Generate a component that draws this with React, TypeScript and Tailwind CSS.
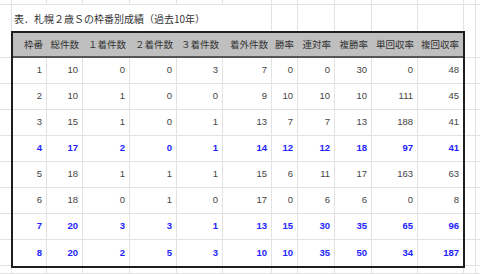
import React from "react";

// Sheet column widths outside the table (Excel-like grid)
const SHEET_COLS = ["w-[12px]", "w-[35px]", "w-[36px]", "w-[47px]", "w-[47px]", "w-[46px]", "w-[49px]", "w-[26px]", "w-[37px]", "w-[37px]", "w-[46px]", "w-[46px]", "w-[12px]"];
const RIGHT_COLS = ["w-[49px]", "w-[26px]", "w-[37px]", "w-[37px]", "w-[46px]", "w-[46px]", "w-[12px]"];

// Table column widths (inside the black border)
const TABLE_COLS = ["w-[34px]", "w-[36px]", "w-[47px]", "w-[47px]", "w-[46px]", "w-[49px]", "w-[26px]", "w-[37px]", "w-[37px]", "w-[46px]", "w-[45px]"];

const HEADERS = ["枠番", "総件数", "１着件数", "２着件数", "３着件数", "着外件数", "勝率", "連対率", "複勝率", "単回収率", "複回収率"];

const ROWS = [
  { v: [1, 10, 0, 0, 3, 7, 0, 0, 30, 0, 48], hi: false },
  { v: [2, 10, 1, 0, 0, 9, 10, 10, 10, 111, 45], hi: false },
  { v: [3, 15, 1, 0, 1, 13, 7, 7, 13, 188, 41], hi: false },
  { v: [4, 17, 2, 0, 1, 14, 12, 12, 18, 97, 41], hi: true },
  { v: [5, 18, 1, 1, 1, 15, 6, 11, 17, 163, 63], hi: false },
  { v: [6, 18, 0, 1, 0, 17, 0, 6, 6, 0, 8], hi: false },
  { v: [7, 20, 3, 3, 1, 13, 15, 30, 35, 65, 96], hi: true },
  { v: [8, 20, 2, 5, 3, 10, 10, 35, 50, 34, 187], hi: true },
];

const jp = "font-['Noto_Sans_CJK_JP',sans-serif]";
const num = "font-['Liberation_Sans','Noto_Sans_CJK_JP',sans-serif]";

const GridRow = ({ h }: { h: string }) => (
  <div className={`flex ${h}`}>
    {SHEET_COLS.map((w, i) => (
      <div key={i} className={`${w} shrink-0 border-r border-b border-[#e2e2e2]`} />
    ))}
    <div className="flex-1 border-b border-[#e2e2e2]" />
  </div>
);

const SideCells = ({ right }: { right?: boolean }) => {
  const heights = ["h-[27px]", "h-[26px]", "h-[26px]", "h-[26px]", "h-[26px]", "h-[26px]", "h-[26px]", "h-[26px]", "h-[26px]"];
  return (
    <div className="flex flex-col">
      {heights.map((h, i) => (
        <div key={i} className={`${h} flex border-b border-[#e2e2e2]`}>
          <div className={`w-[11px] ${right ? "border-r border-[#e2e2e2]" : "border-r-0"}`} />
          {right && <div className="flex-1" />}
        </div>
      ))}
    </div>
  );
};

export default function App() {
  return (
    <div className="w-[480px] h-[274px] bg-white overflow-hidden flex flex-col">
      <GridRow h="h-[5px]" />

      {/* Title row */}
      <div className="flex h-[26px]">
        <div className="w-[12px] shrink-0 border-r border-[#e2e2e2]" />
        <div className={`w-[211px] shrink-0 flex items-center pl-[2px] text-[10px] text-[#333] whitespace-nowrap ${jp}`}>
          表．札幌２歳Ｓの枠番別成績（過去10年）
        </div>
        {RIGHT_COLS.map((w, i) => (
          <div key={i} className={`${w} shrink-0 border-r border-[#e2e2e2]`} />
        ))}
        <div className="flex-1" />
      </div>

      {/* Table block */}
      <div className="flex">
        <SideCells />
        <div className="w-[454px] shrink-0 border-2 border-[#1e1e1e]">
          <div className="flex h-[25px] bg-[#bfbfbf] border-b-2 border-[#555]">
            {HEADERS.map((t, i) => (
              <div key={i} className={`${TABLE_COLS[i]} shrink-0 flex items-center justify-end pr-[4px] text-[9.5px] text-[#333] whitespace-nowrap ${jp}`}>
                {t}
              </div>
            ))}
          </div>
          {ROWS.map((r, ri) => (
            <div key={ri} className={`flex h-[26px] ${ri < ROWS.length - 1 ? "border-b border-[#e2e2e2]" : ""}`}>
              {r.v.map((n, i) => (
                <div
                  key={i}
                  className={`${TABLE_COLS[i]} shrink-0 flex items-center justify-end pr-[4px] text-[9.5px] ${num} ${
                    i < r.v.length - 1 ? "border-r border-[#e2e2e2]" : ""
                  } ${r.hi ? "text-[#2323ff] font-bold" : "text-[#444]"}`}
                >
                  {n}
                </div>
              ))}
            </div>
          ))}
        </div>
        <div className="flex-1">
          <SideCells right />
        </div>
      </div>

      <GridRow h="flex-1" />
    </div>
  );
}
